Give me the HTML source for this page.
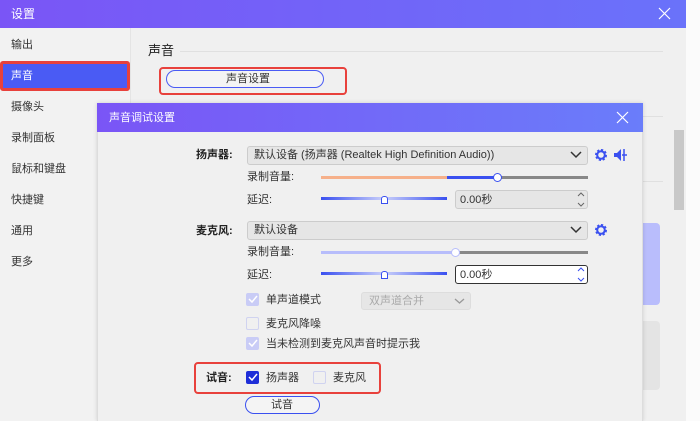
<!DOCTYPE html>
<html><head><meta charset="utf-8"><style>
*{box-sizing:border-box;margin:0;padding:0}
body{width:700px;height:421px;overflow:hidden;background:#fbfbfb;font-family:"Liberation Sans","Noto Sans CJK SC",sans-serif;font-size:11px;color:#333;position:relative}
.a{position:absolute}
.t{position:absolute;white-space:nowrap;line-height:14px}
</style></head><body>
<div class="a" style="left:0;top:0;width:686px;height:421px;background:#f0f0f0"></div>
<div class="a" style="left:0;top:0;width:686px;height:28px;background:linear-gradient(90deg,#7a55f6,#6a72fa)"></div>
<div class="t" style="left:11px;top:7px;color:#fff;font-size:12px">设置</div>
<svg class="a" style="left:658px;top:7px" width="13" height="13"><path d="M1 1L12 12M12 1L1 12" stroke="#fff" stroke-width="1.2"/></svg>
<div class="a" style="left:0;top:28px;width:131px;height:393px;background:#f2f2f2;border-right:1px solid #e4e4e4"></div>
<div class="t" style="left:11px;top:38px">输出</div>
<div class="a" style="left:0;top:61px;width:130px;height:30px;background:#4a5bf4;border:3px solid #e8413c;border-radius:3px"></div>
<div class="t" style="left:11px;top:69px;color:#fff">声音</div>
<div class="t" style="left:11px;top:100px">摄像头</div>
<div class="t" style="left:11px;top:131px">录制面板</div>
<div class="t" style="left:11px;top:162px">鼠标和键盘</div>
<div class="t" style="left:11px;top:193px">快捷键</div>
<div class="t" style="left:11px;top:224px">通用</div>
<div class="t" style="left:11px;top:255px">更多</div>
<div class="t" style="left:148px;top:43px;font-size:13px;color:#222;line-height:16px">声音</div>
<div class="a" style="left:180px;top:51px;width:483px;height:1px;background:#e0e0e0"></div>
<div class="a" style="left:159px;top:67px;width:188px;height:28px;border:2px solid #e8413c;border-radius:4px"></div>
<div class="a" style="left:166px;top:70px;width:158px;height:18px;border:1px solid #4a5bf4;border-radius:9px;background:#f4f4f4"></div>
<div class="t" style="left:226px;top:72px">声音设置</div>
<div class="a" style="left:643px;top:116px;width:20px;height:1px;background:#e0e0e0"></div>
<div class="a" style="left:643px;top:181px;width:20px;height:1px;background:#e0e0e0"></div>
<div class="a" style="left:630px;top:223px;width:30px;height:82px;background:#b9bdfc;border-radius:4px"></div>
<div class="a" style="left:630px;top:321px;width:30px;height:69px;background:#e4e4e4;border-radius:4px"></div>
<div class="a" style="left:674px;top:130px;width:10px;height:80px;background:#c8c8c8"></div>
<div class="a" style="left:97px;top:103px;width:546px;height:318px;background:#f0f0f0;border-left:1px solid #ddd;border-right:1px solid #ddd;box-shadow:0 0 4px rgba(0,0,0,.15)"></div>
<div class="a" style="left:97px;top:103px;width:546px;height:29px;background:linear-gradient(90deg,#7a55f6,#6a7dfa)"></div>
<div class="t" style="left:109px;top:111px;color:#fff">声音调试设置</div>
<svg class="a" style="left:616px;top:111px" width="13" height="13"><path d="M1 1L12 12M12 1L1 12" stroke="#fff" stroke-width="1.2"/></svg>
<div class="t" style="left:196px;top:148px;font-weight:bold;color:#222">扬声器:</div>
<div class="a" style="left:247px;top:146px;width:341px;height:19px;background:#e6e6e6;border:1px solid #ccc;border-radius:3px"></div>
<div class="t" style="left:254px;top:148px">默认设备 (扬声器 (Realtek High Definition Audio))</div>
<svg class="a" style="left:570px;top:151px" width="12" height="8"><path d="M1 1L6 6L11 1" stroke="#333" stroke-width="1.5" fill="none"/></svg>
<svg class="a" style="left:594px;top:148px" width="14" height="14" viewBox="0 0 14 14"><circle cx="7" cy="7" r="4.5" fill="none" stroke="#3a50f0" stroke-width="3" stroke-dasharray="2 1.5"/><circle cx="7" cy="7" r="3.8" fill="none" stroke="#3a50f0" stroke-width="2"/></svg>
<svg class="a" style="left:613px;top:148px" width="16" height="14"><path d="M1 5H4L8 1V13L4 9H1Z" fill="#3a50f0"/><path d="M11 1V13M9 7H14" stroke="#3a50f0" stroke-width="1.5"/></svg>
<div class="t" style="left:247px;top:170px">录制音量:</div>
<div class="a" style="left:321px;top:176px;width:126px;height:3px;background:#f6b08a"></div>
<div class="a" style="left:447px;top:176px;width:50px;height:3px;background:#3a50f0"></div>
<div class="a" style="left:497px;top:176px;width:91px;height:3px;background:#888"></div>
<div class="a" style="left:493px;top:173px;width:9px;height:9px;border-radius:50%;background:#fff;border:1.5px solid #3a50f0"></div>
<div class="t" style="left:247px;top:193px">延迟:</div>
<div class="a" style="left:321px;top:197px;width:126px;height:3px;background:linear-gradient(90deg,#3a50f0,#c9cffa 50%,#3a50f0)"></div>
<div class="a" style="left:381px;top:196px;width:7px;height:8px;background:#fff;border:1.5px solid #3a50f0;border-radius:3px 3px 0 0"></div>
<div class="a" style="left:455px;top:190px;width:133px;height:19px;background:#e6e6e6;border:1px solid #ccc;border-radius:3px"></div>
<div class="t" style="left:460px;top:193px">0.00秒</div>
<svg class="a" style="left:577px;top:192px" width="8" height="15"><path d="M1 4L4 1L7 4M1 11L4 14L7 11" stroke="#666" fill="none"/></svg>
<div class="t" style="left:196px;top:224px;font-weight:bold;color:#222">麦克风:</div>
<div class="a" style="left:247px;top:221px;width:341px;height:19px;background:#e6e6e6;border:1px solid #ccc;border-radius:3px"></div>
<div class="t" style="left:254px;top:223px">默认设备</div>
<svg class="a" style="left:570px;top:226px" width="12" height="8"><path d="M1 1L6 6L11 1" stroke="#333" stroke-width="1.5" fill="none"/></svg>
<svg class="a" style="left:594px;top:223px" width="14" height="14" viewBox="0 0 14 14"><circle cx="7" cy="7" r="4.5" fill="none" stroke="#3a50f0" stroke-width="3" stroke-dasharray="2 1.5"/><circle cx="7" cy="7" r="3.8" fill="none" stroke="#3a50f0" stroke-width="2"/></svg>
<div class="t" style="left:247px;top:245px">录制音量:</div>
<div class="a" style="left:321px;top:251px;width:134px;height:3px;background:#b7bdfb"></div>
<div class="a" style="left:455px;top:251px;width:133px;height:3px;background:#888"></div>
<div class="a" style="left:451px;top:248px;width:9px;height:9px;border-radius:50%;background:#fff;border:1.5px solid #b7bdfb"></div>
<div class="t" style="left:247px;top:268px">延迟:</div>
<div class="a" style="left:321px;top:272px;width:126px;height:3px;background:linear-gradient(90deg,#3a50f0,#c9cffa 50%,#3a50f0)"></div>
<div class="a" style="left:381px;top:271px;width:7px;height:8px;background:#fff;border:1.5px solid #3a50f0;border-radius:3px 3px 0 0"></div>
<div class="a" style="left:455px;top:265px;width:133px;height:19px;background:#fff;border:1px solid #333;border-radius:3px"></div>
<div class="t" style="left:460px;top:268px">0.00秒</div>
<svg class="a" style="left:577px;top:267px" width="8" height="15"><path d="M1 4L4 1L7 4M1 11L4 14L7 11" stroke="#3a50f0" fill="none"/></svg>
<div class="a" style="left:246px;top:293px;width:13px;height:13px;background:#c9ccf6;border-radius:2px"></div>
<svg class="a" style="left:248px;top:295px" width="10" height="9"><path d="M1 4L4 7L9 1" stroke="#fff" stroke-width="1.5" fill="none"/></svg>
<div class="t" style="left:266px;top:293px">单声道模式</div>
<div class="a" style="left:361px;top:292px;width:110px;height:18px;background:#e6e6e6;border:1px solid #ddd;border-radius:3px"></div>
<div class="t" style="left:369px;top:294px;color:#aaa">双声道合并</div>
<svg class="a" style="left:454px;top:298px" width="11" height="7"><path d="M1 1L5.5 5L10 1" stroke="#999" stroke-width="1.3" fill="none"/></svg>
<div class="a" style="left:246px;top:317px;width:13px;height:13px;border:1px solid #d0d3f0;border-radius:2px"></div>
<div class="t" style="left:266px;top:317px">麦克风降噪</div>
<div class="a" style="left:246px;top:337px;width:13px;height:13px;background:#c9ccf6;border-radius:2px"></div>
<svg class="a" style="left:248px;top:339px" width="10" height="9"><path d="M1 4L4 7L9 1" stroke="#fff" stroke-width="1.5" fill="none"/></svg>
<div class="t" style="left:266px;top:337px">当未检测到麦克风声音时提示我</div>
<div class="a" style="left:194px;top:362px;width:187px;height:32px;border:2px solid #e8413c;border-radius:4px"></div>
<div class="t" style="left:206px;top:371px;font-weight:bold;color:#222">试音:</div>
<div class="a" style="left:246px;top:371px;width:13px;height:13px;background:#1e2ed8;border-radius:2px"></div>
<svg class="a" style="left:248px;top:373px" width="10" height="9"><path d="M1 4L4 7L9 1" stroke="#fff" stroke-width="1.5" fill="none"/></svg>
<div class="t" style="left:266px;top:371px">扬声器</div>
<div class="a" style="left:313px;top:371px;width:13px;height:13px;border:1px solid #d0d3f0;border-radius:2px"></div>
<div class="t" style="left:333px;top:371px">麦克风</div>
<div class="a" style="left:245px;top:396px;width:75px;height:18px;border:1px solid #3a50f0;border-radius:9px;background:#f4f4f4"></div>
<div class="t" style="left:271px;top:398px">试音</div>
</body></html>
